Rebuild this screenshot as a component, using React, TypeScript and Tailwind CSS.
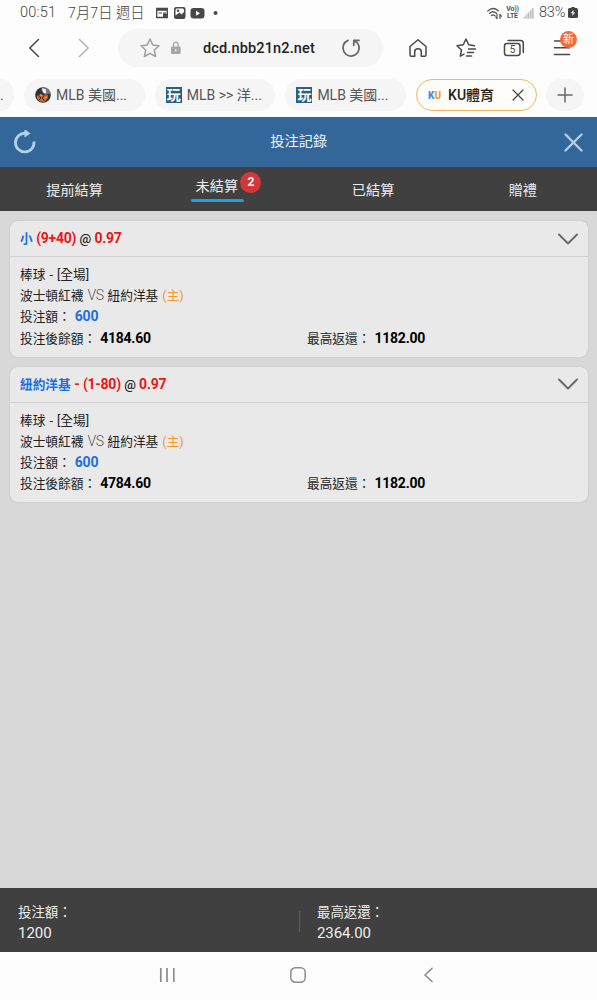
import type { ReactNode } from "react";

const stroke = {
  fill: "none",
  stroke: "currentColor",
  strokeLinecap: "round",
  strokeLinejoin: "round",
} as const;

type Bet = {
  pick: string;
  line: string;
  odds: string;
  sport: string;
  away: string;
  home: string;
  stake: string;
  balance: string;
  payout: string;
};

const bets: Bet[] = [
  {
    pick: "小",
    line: "(9+40)",
    odds: "0.97",
    sport: "棒球 - [全場]",
    away: "波士頓紅襪",
    home: "紐約洋基",
    stake: "600",
    balance: "4184.60",
    payout: "1182.00",
  },
  {
    pick: "紐約洋基",
    line: "- (1-80)",
    odds: "0.97",
    sport: "棒球 - [全場]",
    away: "波士頓紅襪",
    home: "紐約洋基",
    stake: "600",
    balance: "4784.60",
    payout: "1182.00",
  },
];

function StatusBar() {
  return (
    <div className="flex h-6 shrink-0 items-center pt-px pl-5 pr-[19px] text-[14.5px] leading-6 text-[#666]">
      <span className="w-12 whitespace-nowrap font-light tracking-[0.2px] text-[#444]">00:51</span>
      <span className="w-[88px] whitespace-nowrap text-[14.3px] font-light text-[#444]">7月7日 週日</span>
      <svg className="h-3.5 w-[62px] text-[#484848]" viewBox="0 0 62 14">
        <path d="M.7 2.5h10.6v9H.7z" fill="none" stroke="currentColor" strokeWidth="1.3" />
        <path d="M.7 2h10.6v2.8H.7zM7 7.5h4.5v4H7z" fill="currentColor" />
        <path d="M2.5 7h3.5M7 7h3" stroke="currentColor" />
        <rect x="18" y="1" width="11.5" height="12" rx="2" fill="currentColor" />
        <path d="M19.500 9.500V4q0-1.500 1.500-1.500h5.500q1.500 0 1.500 1.500v2l-2.500 2.500-2-2z" fill="#fff" />
        <circle cx="22" cy="4.800" r="1.200" fill="currentColor" />
        <rect x="34.500" y="2" width="14" height="10.500" rx="3" fill="currentColor" />
        <path d="M40 4.800v5l4-2.500z" fill="#fff" />
        <circle cx="59.500" cy="7" r="2" fill="currentColor" />
      </svg>
      <svg className="ml-auto h-3.5 w-4 text-[#555]" viewBox="0 0 16 14">
        <path d="M.8 5q5-4.800 10.400-.3M2.600 7.300q3.400-3 6.800 0M4.400 9.500q1.700-1.400 3.400 0" {...stroke} strokeWidth="1.300" />
        <path d="M10 8v4.500M8.700 11l1.300 1.700M13 12.500V8.500M13 8.500l1.400 1.700" {...stroke} strokeWidth="1.200" />
      </svg>
      <span className="ml-[3px] flex w-[13px] flex-col items-center text-[7px] leading-[7px] font-bold tracking-tight text-[#555]">
        <span>Vo))</span>
        <span>LTE</span>
      </span>
      <svg className="ml-1 h-3 w-[11px] text-[#c4c4c4]" viewBox="0 0 11 12">
        <path d="M0 11.500h11V0z" fill="currentColor" opacity="0.5" />
        <path d="M1 11.500v-1.500M3.200 11.500V7.800M5.400 11.500V5.500M7.600 11.500V3.300M9.800 11.500V1" stroke="currentColor" strokeWidth="1.400" />
      </svg>
      <span className="ml-[5px] w-[29px] whitespace-nowrap text-[14.500px] font-light tracking-[-0.2px] text-[#444]">83%</span>
      <svg className="h-3 w-2.5 text-[#444]" viewBox="0 0 9 12" preserveAspectRatio="none">
        <path d="M3 0h3v1h1.500q1.500 0 1.500 1.500v7q0 1.500-1.500 1.500h-6Q0 11 0 9.500v-7Q0 1 1.500 1H3z" fill="currentColor" />
        <path d="M5 2.800 2.500 6.300h1.700L3.800 9l2.700-3.600H4.800z" fill="#fff" />
      </svg>
    </div>
  );
}

function ToolIcon({ children, className = "" }: { children: ReactNode; className?: string }) {
  return (
    <svg className={`size-6 shrink-0 ${className}`} viewBox="0 0 24 24" {...stroke} strokeWidth="1.500">
      {children}
    </svg>
  );
}

function Toolbar() {
  return (
    <div className="flex h-[47px] shrink-0 items-center pl-[22px] text-[#484848]">
      <ToolIcon>
        <path d="M16.500 3.500 7.800 12l8.700 8.500" />
      </ToolIcon>
      <ToolIcon className="ml-[26px] text-[#b0b0b0]">
        <path d="M7.500 3.500 16.200 12l-8.700 8.500" />
      </ToolIcon>
      <div className="ml-[22px] flex h-[38px] w-[265px] shrink-0 items-center rounded-full bg-[#f5f5f5] px-5">
        <ToolIcon className="text-[#a0a0a0]">
          <path d="m12 3 2.700 5.900 6.300.8-4.700 4.300 1.300 6.500-5.600-3.200-5.600 3.200 1.300-6.500L3 9.700l6.300-.8z" />
        </ToolIcon>
        <svg className="ml-2 h-3.5 w-3 text-[#a5a5a5]" viewBox="0 0 12 14">
          <path d="M3.500 6V3.500a2.300 2.300 0 0 1 4.600 0V6" fill="none" stroke="currentColor" strokeWidth="1.300" />
          <rect x="1" y="5.500" width="9.600" height="7.500" rx="1.200" fill="currentColor" />
          <path d="M5.800 8v2.500" stroke="#eee" strokeWidth="1.300" />
        </svg>
        <span className="ml-[21px] pt-[2px] whitespace-nowrap text-[14.500px] font-medium tracking-[0.14px] text-[#222]">
          dcd.nbb21n2.net
        </span>
        <ToolIcon className="ml-auto text-[#666]">
          <path d="M9 4.400a8.100 8.100 0 1 0 9.500 2.600L15 4.800M14.800 9.300V4.400H20" strokeWidth="1.700" />
        </ToolIcon>
      </div>
      <ToolIcon className="ml-[23px]">
        <path d="M4 10.500 12 3.800l8 6.700V19a1.300 1.300 0 0 1-1.300 1.300H15.300v-4.500q0-3-3.300-3t-3.300 3v4.500H5.300A1.300 1.300 0 0 1 4 19z" />
      </ToolIcon>
      <ToolIcon className="ml-6">
        <path d="M20.500 9.700 14.700 8.800 12 3 9.300 8.800 3 9.700l4.500 4.300-1.200 6.200 3.700-2M14.500 13h7M13.500 16.500h6M12.500 20h5" />
      </ToolIcon>
      <span className="relative ml-6 size-6">
        <ToolIcon>
          <path d="M6 4.500h12.500q2.800 0 2.800 2.800v9.200" />
          <rect x="2.500" y="7.500" width="15.500" height="12" rx="2.500" />
        </ToolIcon>
        <span className="absolute top-[8px] left-[2.500px] w-4 text-center text-[10px] leading-[12px]">5</span>
      </span>
      <span className="relative ml-6 size-6">
        <ToolIcon>
          <path d="M4.500 5h15M4.500 11.700h15M4.500 18.500h15" />
        </ToolIcon>
        <span className="absolute -top-[5px] left-2.5 size-[17px] rounded-full bg-[#f26a3d] text-center text-[11px] leading-[17px] text-white">
          新
        </span>
      </span>
    </div>
  );
}

function BallIcon() {
  return (
    <svg className="size-4" viewBox="0 0 16 16">
      <circle cx="8" cy="8" r="7.800" fill="#333" />
      <path d="M8 .2a7.800 7.800 0 0 1 7.500 6L10 8 6 3z" fill="#777" />
      <path d="M7 1 11 2.500v4L8 5.500z" fill="#eee" />
      <path d="M2 9 6 7l3 1.500 4-.5-.5 3.500-3 3.500-4.500-.5-3-3z" fill="#dc642a" />
      <path d="m4 8.500 2 2.500-2 2M8.500 8.500l-1 3 2 2.500" fill="none" stroke="#332a24" />
      <path d="m5 8 2 .8M10 11l2-1" stroke="#f1b543" />
    </svg>
  );
}

function WanIcon() {
  return (
    <span className="flex size-4 items-center justify-center overflow-hidden bg-[#276083] text-[14px] leading-4 font-bold text-white">
      玩
    </span>
  );
}

function BrowserTab({ icon, children }: { icon: ReactNode; children: ReactNode }) {
  return (
    <div className="flex h-8 w-[120.700px] shrink-0 items-center gap-[5px] rounded-full bg-[#f5f5f5] pl-[11px] text-[14px] text-[#555]">
      {icon}
      <span className="whitespace-nowrap">{children}</span>
    </div>
  );
}

function TabStrip() {
  return (
    <div className="flex h-[46px] shrink-0 items-center gap-2.5 pt-0.5">
      <div className="h-8 w-3.5 shrink-0 rounded-r-full bg-[#f5f5f5] text-[14px] leading-8 text-[#555]">.</div>
      <BrowserTab icon={<BallIcon />}>MLB 美國...</BrowserTab>
      <BrowserTab icon={<WanIcon />}>MLB &gt;&gt; 洋...</BrowserTab>
      <BrowserTab icon={<WanIcon />}>MLB 美國...</BrowserTab>
      <div className="flex h-8 w-[120.500px] shrink-0 items-center rounded-full border-[1.500px] border-[#efb95f] bg-[#fffdf9] pl-[11px] text-[14px] font-medium text-[#222]">
        <span className="w-5 text-[10px] font-black text-[#f39a3a]">
          <span className="text-[#3f92df]">K</span>U
        </span>
        <span className="whitespace-nowrap">KU體育</span>
        <svg className="mr-3 ml-auto size-3 text-[#444]" viewBox="0 0 12 12" {...stroke} strokeWidth="1.200">
          <path d="m1 1 10 10M11 1 1 11" />
        </svg>
      </div>
      <div className="-ml-px flex h-8 w-[38px] shrink-0 items-center justify-center rounded-full bg-[#f5f5f5] text-[#666]">
        <svg className="size-4" viewBox="0 0 16 16" {...stroke} strokeWidth="1.500">
          <path d="M8 1v14M1 8h14" />
        </svg>
      </div>
    </div>
  );
}

function PageHeader() {
  return (
    <header className="flex h-[50px] shrink-0 items-center justify-between bg-[#33679a] pr-3.5 pl-[13px] text-[#b4d0ea]">
      <svg className="size-6" viewBox="0 0 24 24">
        <path d="M12.500 3.300A9.300 9.300 0 1 0 21 11.500" fill="none" stroke="currentColor" strokeWidth="2.800" />
        <path d="M11.500-1 17.500 3.500l-6 4z" fill="currentColor" />
      </svg>
      <h1 className="mr-[3.500px] text-[14.200px] text-[#edf5fc]">投注記錄</h1>
      <svg className="size-[19px]" viewBox="0 0 19 19" {...stroke} strokeWidth="2.300">
        <path d="m1.500 1.500 16 16M17.500 1.500l-16 16" />
      </svg>
    </header>
  );
}

function RecordTabs() {
  return (
    <nav className="grid h-11 shrink-0 grid-cols-4 bg-[#404040] text-center text-[14.200px] leading-[46px] text-[#ececec]">
      <span>提前結算</span>
      <span className="flex justify-center">
        <span className="relative -ml-3 h-[34.500px] w-[53px] pr-[2px] leading-[38px] whitespace-nowrap">
          未結算
          <span className="absolute bottom-0 left-0 h-[3px] w-full rounded-full bg-[#1ba1e2]" />
          <span className="absolute top-[4.500px] -right-[17px] size-[21px] rounded-full bg-[#d4373b] text-[12px] leading-[21px] font-bold text-white">
            2
          </span>
        </span>
      </span>
      <span>已結算</span>
      <span className="pl-px">贈禮</span>
    </nav>
  );
}

function BetCard({ bet }: { bet: Bet }) {
  return (
    <section className="h-[135.500px] shrink-0 rounded-lg bg-[#e9e9e9] text-[12.700px] text-[#222] shadow-[0_0_2px_rgba(0,0,0,0.12)] [word-spacing:0.9px]">
      <div className="flex h-[36px] items-center justify-between border-b border-[#d2d2d2] pr-2.5 pl-2.5 font-bold">
        <span className="text-[14px] leading-5 tracking-[-0.250px] whitespace-nowrap [word-spacing:0.2px]">
          <span className="text-[12.700px] tracking-normal text-[#1b6fe0]">{bet.pick}</span>{" "}
          <span className="text-[#ed1515]">{bet.line}</span> <span className="text-[13px] font-medium">@</span>{" "}
          <span className="text-[#ed1515]">{bet.odds}</span>
        </span>
        <svg className="h-3 w-5 text-[#666]" viewBox="0 0 20 12" {...stroke} strokeWidth="1.800">
          <path d="m1 1.500 9 9 9-9" />
        </svg>
      </div>
      <div className="px-2.5 pt-[7px] leading-[21.200px]">
        <p>{bet.sport}</p>
        <p>
          {bet.away} <span className="text-[14px] leading-5 font-light tracking-[-0.500px] text-[#555]">VS</span>{" "}
          {bet.home} <span className="text-[#f29a2e]">(主)</span>
        </p>
        <p>
          投注額：{" "}
          <b className="text-[14px] leading-5 tracking-[-0.250px] text-[#1b6fe0]">{bet.stake}</b>
        </p>
        <div className="flex">
          <p className="w-[287px]">
            投注後餘額：{" "}
            <b className="text-[14px] leading-5 tracking-[-0.250px] text-black">{bet.balance}</b>
          </p>
          <p>
            最高返還：{" "}
            <b className="text-[14px] leading-5 tracking-[-0.250px] text-black">{bet.payout}</b>
          </p>
        </div>
      </div>
    </section>
  );
}

function Totals() {
  return (
    <footer className="flex h-16 shrink-0 items-center bg-[#404040] pt-[5px] text-[13.400px] leading-[21px] text-[#eee]">
      <div className="w-[299px] pl-[18px]">
        <p>投注額：</p>
        <p className="text-[15px]">1200</p>
      </div>
      <div className="-mt-0.5 h-[21px] w-px bg-[#5e5e5e]" />
      <div className="pl-[17px]">
        <p>最高返還：</p>
        <p className="text-[15px] tracking-[-0.1px]">2364.00</p>
      </div>
    </footer>
  );
}

function NavBar() {
  return (
    <div className="flex h-12 shrink-0 items-center justify-center gap-[114.500px] pr-0.5 pb-0.5 text-[#8c8c8c]">
      <svg className="size-4" viewBox="0 0 16 16" stroke="currentColor" strokeWidth="1.700">
        <path d="M1.800 1v14M8 1v14M14.800 1v14" />
      </svg>
      <svg className="size-4" viewBox="0 0 16 16" {...stroke} strokeWidth="1.500">
        <rect x="0.800" y="0.800" width="14.400" height="14.400" rx="4.500" />
      </svg>
      <svg className="size-4" viewBox="0 0 16 16" {...stroke} strokeWidth="1.700">
        <path d="M12 1.500 5 8l7 6.500" />
      </svg>
    </div>
  );
}

export default function App() {
  return (
    <div className="flex h-[1000px] w-[597px] flex-col overflow-hidden bg-[#fdfdfd] font-['Roboto','Noto_Sans_CJK_TC',sans-serif]">
      <StatusBar />
      <Toolbar />
      <TabStrip />
      <PageHeader />
      <RecordTabs />
      <main className="flex flex-1 flex-col gap-2.5 bg-[#d8d8d8] pt-2.5 pr-[9px] pl-2.5">
        {bets.map((bet) => (
          <BetCard key={bet.balance} bet={bet} />
        ))}
      </main>
      <Totals />
      <NavBar />
    </div>
  );
}
